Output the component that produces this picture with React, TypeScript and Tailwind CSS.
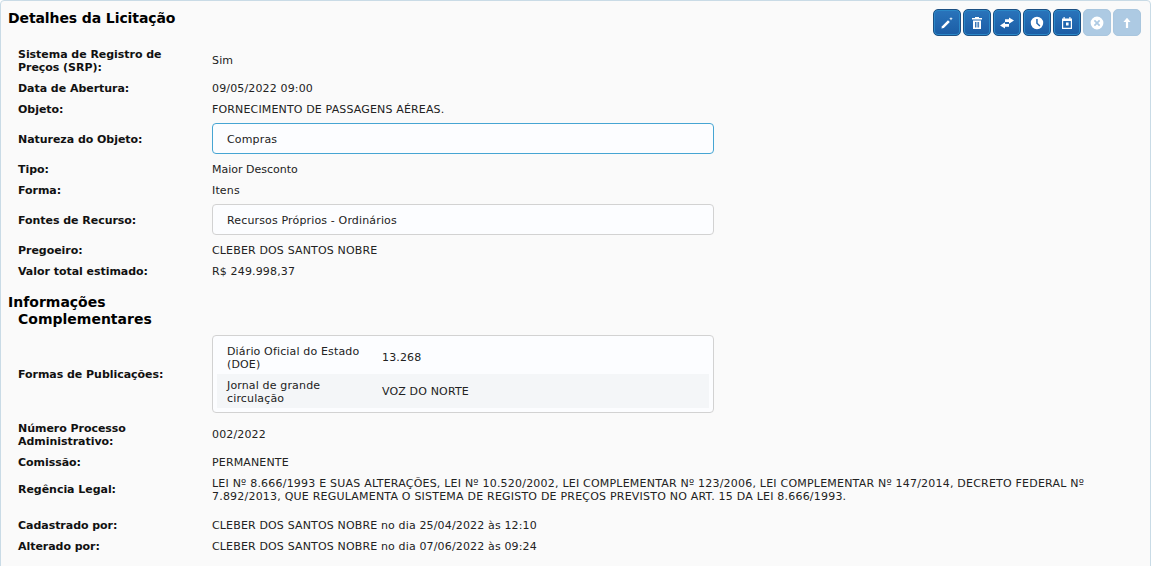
import React from "react";

const font = "font-['DejaVu_Sans',Verdana,sans-serif]";

const Row = ({ label, children, className = "", valueClass = "", labelClass = "" }: { label: string; children: React.ReactNode; className?: string; valueClass?: string; labelClass?: string }) => (
  <div className={`flex items-center ${className}`}>
    <div className={`w-[211px] shrink-0 pl-[17px] pr-[40px] text-[11px] leading-[13px] font-bold text-[#111] tracking-[-0.04px] ${labelClass}`}>{label}</div>
    <div className={`min-w-0 flex-1 pr-[50px] text-[11px] leading-[13px] text-[#222] tracking-[0.15px] ${valueClass}`}>{children}</div>
  </div>
);

const Box = ({ children, focus }: { children: React.ReactNode; focus?: boolean }) => (
  <div className={`-mt-[1px] mb-[1px] flex h-[31px] w-[502px] items-center rounded-[4px] border bg-[#fcfdff] px-[14px] pt-[2px] ${focus ? "border-[#46a5d3]" : "border-[#d2d2d2]"}`}>
    {children}
  </div>
);

const ToolButton = ({ children, off }: { children: React.ReactNode; off?: boolean }) => (
  <button className={`flex h-[27px] w-[28px] items-center justify-center rounded-[5px] border text-white ${off ? "border-[#a9c6de] bg-[#adcae3]" : "border-[#1c4f82] bg-gradient-to-b from-[#2a74bb] to-[#1b5da5] shadow-[inset_0_0_0_1px_#2b88c8]"}`}>
    {children}
  </button>
);

const PencilIcon = () => (
  <svg width="14" height="14" viewBox="0 0 14 14" fill="currentColor">
    <path d="M2 10.2 8 4.2l1.8 1.8-6 6-2.4.6z" />
    <path d="M11 1l.5 1.3 1.3.5-1.3.5-.5 1.3-.5-1.3-1.3-.5 1.3-.5z" />
  </svg>
);

const TrashIcon = () => (
  <svg width="14" height="14" viewBox="0 0 14 14" fill="currentColor">
    <path d="M5 1h4v1h3v1.4H2V2h3z" />
    <path fillRule="evenodd" d="M3 4.4h8V13H3zM5 6v5.4h.9V6zm1.6 0v5.4h.9V6zm1.6 0v5.4h.9V6z" />
  </svg>
);

const SwapIcon = () => (
  <svg width="16" height="14" viewBox="0 0 16 14" fill="currentColor">
    <path d="M10 1.5 15 4.6l-5 3.1V6H6V3.2h4z" />
    <path d="M6 6.3v1.7h4v2.8H6v1.7L1 9.4z" />
  </svg>
);

const ClockIcon = () => (
  <svg width="14" height="14" viewBox="0 0 14 14" fill="currentColor">
    <path fillRule="evenodd" d="M7 .8a6.2 6.2 0 1 1 0 12.4A6.2 6.2 0 0 1 7 .8zM6.2 3v4.6l3.2 3 1-1.1-2.7-2.5V3z" />
  </svg>
);

const CalendarIcon = () => (
  <svg width="14" height="14" viewBox="0 0 14 14" fill="currentColor">
    <path fillRule="evenodd" d="M3.5 1h1.2v1.4h4.6V1h1.2v1.4H12V13H2V2.4h1.5zM3.2 5v6.8h7.6V5zM6 6.6h2.6v2.8H6z" />
  </svg>
);

const CloseIcon = () => (
  <svg width="14" height="14" viewBox="0 0 14 14" fill="currentColor">
    <path fillRule="evenodd" d="M7 .6a6.4 6.4 0 1 1 0 12.8A6.4 6.4 0 0 1 7 .6zM5 3.8 3.8 5 5.8 7l-2 2L5 10.2l2-2 2 2L10.2 9l-2-2 2-2L9 3.8l-2 2z" />
  </svg>
);

const UpIcon = () => (
  <svg width="10" height="12" viewBox="0 0 10 12" fill="currentColor">
    <path d="M5 .8 8.6 5H6.1v6H3.9V5H1.4z" />
  </svg>
);

export default function App() {
  return (
    <div className={`${font} h-[566px] overflow-hidden bg-white`}>
      <div className="h-[580px] rounded-[4px] border border-[#c9dbe6] bg-[#fafafa] pt-[1px]">
        <div className="flex items-start justify-between pl-[7px] pr-[9px]">
          <h2 className="pt-[8px] text-[14px] leading-[16px] font-bold text-black tracking-[-0.1px]">Detalhes da Licitação</h2>
          <div className="flex gap-[2px] pt-[7px]">
            <ToolButton><PencilIcon /></ToolButton>
            <ToolButton><TrashIcon /></ToolButton>
            <ToolButton><SwapIcon /></ToolButton>
            <ToolButton><ClockIcon /></ToolButton>
            <ToolButton><CalendarIcon /></ToolButton>
            <ToolButton off><CloseIcon /></ToolButton>
            <ToolButton off><UpIcon /></ToolButton>
          </div>
        </div>

        <div className="mt-[12px] flex flex-col">
          <Row label="Sistema de Registro de Preços (SRP):" className="h-[26px]" valueClass="pb-[2px]">Sim</Row>
          <Row label="Data de Abertura:" className="mt-[8px] h-[13px]">09/05/2022 09:00</Row>
          <Row label="Objeto:" className="mt-[8px] h-[13px]">FORNECIMENTO DE PASSAGENS AÉREAS.</Row>
          <Row label="Natureza do Objeto:" className="mt-[8px]"><Box focus>Compras</Box></Row>
          <Row label="Tipo:" className="mt-[8px] h-[13px]" valueClass="tracking-normal">Maior Desconto</Row>
          <Row label="Forma:" className="mt-[8px] h-[13px]">Itens</Row>
          <Row label="Fontes de Recurso:" className="mt-[8px]"><Box>Recursos Próprios - Ordinários</Box></Row>
          <Row label="Pregoeiro:" className="mt-[8px] h-[13px]" valueClass="tracking-[0.09px]">CLEBER DOS SANTOS NOBRE</Row>
          <Row label="Valor total estimado:" className="mt-[8px] h-[13px]">R$ 249.998,37</Row>

          <h3 className="mt-[16px] w-[200px] pl-[7px] text-[14px] leading-[17px] font-bold text-black">
            Informações
            <span className="block pl-[10px]">Complementares</span>
          </h3>

          <Row label="Formas de Publicações:" className="mt-[7px]">
            <div className="w-[502px] rounded-[4px] border border-[#d2d2d2] bg-[#fcfdff] p-[4px]">
              <div className="flex h-[34px] items-center">
                <div className="w-[165px] shrink-0 pl-[10px] pr-[20px] pt-[2px]">Diário Oficial do Estado (DOE)</div>
                <div>13.268</div>
              </div>
              <div className="flex h-[34px] items-center bg-[#f4f6f8]">
                <div className="w-[165px] shrink-0 pl-[10px] pr-[20px] pt-[2px]">Jornal de grande circulação</div>
                <div>VOZ DO NORTE</div>
              </div>
            </div>
          </Row>

          <Row label="Número Processo Administrativo:" className="mt-[9px] h-[26px]" valueClass="pb-[2px]">002/2022</Row>
          <Row label="Comissão:" className="mt-[8px] h-[13px]">PERMANENTE</Row>
          <Row label="Regência Legal:" className="mt-[8px] h-[26px]" labelClass="pb-[2px]" valueClass="tracking-[0.21px]">
            LEI Nº 8.666/1993 E SUAS ALTERAÇÕES, LEI Nº 10.520/2002, LEI COMPLEMENTAR Nº 123/2006, LEI COMPLEMENTAR Nº 147/2014, DECRETO FEDERAL Nº 7.892/2013, QUE REGULAMENTA O SISTEMA DE REGISTO DE PREÇOS PREVISTO NO ART. 15 DA LEI 8.666/1993.
          </Row>
          <Row label="Cadastrado por:" className="mt-[16px] h-[13px]">CLEBER DOS SANTOS NOBRE no dia 25/04/2022 às 12:10</Row>
          <Row label="Alterado por:" className="mt-[8px] h-[13px]">CLEBER DOS SANTOS NOBRE no dia 07/06/2022 às 09:24</Row>
        </div>
      </div>
    </div>
  );
}
